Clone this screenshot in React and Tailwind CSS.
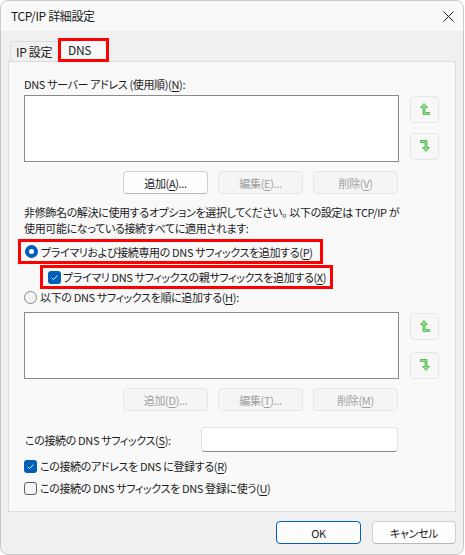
import React from 'react';

const font = "font-['Noto_Sans_CJK_JP','Noto_Sans',sans-serif] [font-feature-settings:'palt'] tracking-[-0.35px]";

function U({ children }) {
  return <span className="underline underline-offset-2">{children}</span>;
}

function Btn({ children, disabled, primary, className = '' }) {
  const look = disabled
    ? 'bg-[#f5f5f5] border-[#e5e5e5] text-[#a0a0a0]'
    : primary
      ? 'bg-[#fdfdfd] border-[#005fb8] text-[#1b1b1b]'
      : 'bg-[#fdfdfd] border-[#d0d0d0] border-b-[#b8b8b8] text-[#1b1b1b]';
  return (
    <div className={`h-[23px] flex items-center justify-center whitespace-nowrap rounded-[4px] border ${look} ${className}`}>
      {children}
    </div>
  );
}

function UpIcon() {
  return (
    <svg width="10" height="13" viewBox="0 0 10 13">
      <polygon points="4,0.5 7.5,4.5 5,4.5 5,9.5 9.5,9.5 9.5,11.5 3,11.5 3,4.5 0.5,4.5" fill="#8fe38a" stroke="#45ad45" strokeWidth="0.8" strokeLinejoin="round" />
    </svg>
  );
}

function DownIcon() {
  return (
    <svg width="10" height="13" viewBox="0 0 10 13">
      <polygon points="0.5,0.5 7,0.5 7,7.5 9.5,7.5 6,11.5 2.5,7.5 5,7.5 5,2.5 0.5,2.5" fill="#8fe38a" stroke="#45ad45" strokeWidth="0.8" strokeLinejoin="round" />
    </svg>
  );
}

function MoveBtn({ children, className = '' }) {
  return (
    <div className={`w-[29px] h-[27px] flex items-center justify-center rounded-[4px] border border-[#e5e5e5] bg-[#f7f7f7] ${className}`}>
      {children}
    </div>
  );
}

function Radio({ checked }) {
  return checked ? (
    <div className="w-[13px] h-[13px] rounded-full bg-[#005fb8] flex items-center justify-center shrink-0">
      <div className="w-[5px] h-[5px] rounded-full bg-white" />
    </div>
  ) : (
    <div className="w-[13px] h-[13px] rounded-full border border-[#8a8a8a] bg-[#f3f3f3] shrink-0" />
  );
}

function Check({ checked }) {
  return checked ? (
    <div className="w-[13px] h-[13px] rounded-[3px] bg-[#005fb8] flex items-center justify-center shrink-0">
      <svg width="9" height="9" viewBox="0 0 9 9">
        <path d="M1.8 4.8 L3.6 6.6 L7.4 2.6" fill="none" stroke="#fff" strokeWidth="0.9" />
      </svg>
    </div>
  ) : (
    <div className="w-[13px] h-[13px] rounded-[3px] border border-[#5e5e5e] bg-[#f5f5f5] shrink-0" />
  );
}

function ListRow({ upTop, downTop }) {
  return (
    <div className="flex">
      <div className="w-[375px] h-[67px] bg-white border border-[#8a8a8a]" />
      <div className="ml-[11px] flex flex-col">
        <MoveBtn className={upTop}><UpIcon /></MoveBtn>
        <MoveBtn className={downTop}><DownIcon /></MoveBtn>
      </div>
    </div>
  );
}

export default function App() {
  return (
    <div className={`w-[465px] h-[555px] bg-white ${font} text-[#1b1b1b] text-[11px] leading-[16px] whitespace-nowrap`}>
      <div className="w-[464px] h-[555px] flex flex-col rounded-[8px] border border-[#c9c9c9] overflow-hidden bg-[#f0f0f0]">
        {/* title bar */}
        <div className="h-[30px] shrink-0 flex items-center justify-between pl-[10px] pr-[9px] bg-[#f9f9f9]">
          <span className="text-[12px]">TCP/IP 詳細設定</span>
          <svg width="11" height="11" viewBox="0 0 11 11">
            <path d="M0.5 0.5 L10.5 10.5 M10.5 0.5 L0.5 10.5" stroke="#1b1b1b" strokeWidth="1" />
          </svg>
        </div>

        {/* tabs */}
        <div className="flex items-end pl-[9px] pt-[7px] h-[30px] shrink-0">
          <div className="h-[20px] w-[48px] pl-[5px] flex items-center border-l border-t border-[#dcdcdc] rounded-tl-[3px] bg-[#f0f0f0] text-[12px]">
            IP 設定
          </div>
          <div className="h-[24px] w-[51px] -mb-[1px] relative z-10 pl-[7px] flex items-center border-[3px] border-[#ff0000] bg-[#f9f9f9] text-[12px]">
            DNS
          </div>
        </div>

        {/* panel */}
        <div className="ml-[7px] w-[448px] h-[451px] shrink-0 border border-[#dcdcdc] bg-[#f9f9f9] pl-[15px] flex flex-col">
          <div className="mt-[14px] h-[16px]">DNS サーバー アドレス (使用順)(<U>N</U>):</div>
          <div className="mt-[3px]">
            <ListRow upTop="mt-[1px]" downTop="mt-[10px]" />
          </div>
          <div className="mt-[9px] flex gap-[10px] ml-[99px]">
            <Btn className="w-[85px]">追加(<U>A</U>)...</Btn>
            <Btn disabled className="w-[85px]">編集(<U>E</U>)...</Btn>
            <Btn disabled className="w-[85px]">削除(<U>V</U>)</Btn>
          </div>
          <div className="mt-[10px] leading-[16px]">
            <div>非修飾名の解決に使用するオプションを選択してください。 以下の設定は TCP/IP が</div>
            <div>使用可能になっている接続すべてに適用されます:</div>
          </div>
          <div className="mt-[3px] -ml-[6px] w-[305px] h-[25px] border-[3px] border-[#ff0000] flex items-center pl-[4px] gap-[3px]">
            <Radio checked />
            <span>プライマリおよび接続専用の DNS サフィックスを追加する(<U>P</U>)</span>
          </div>
          <div className="mt-[1px] ml-[16px] w-[293px] h-[24px] border-[3px] border-[#ff0000] flex items-center pl-[5px] gap-[2px]">
            <Check checked />
            <span>プライマリ DNS サフィックスの親サフィックスを追加する(<U>X</U>)</span>
          </div>
          <div className="h-[16px] flex items-center gap-[3px]">
            <Radio />
            <span>以下の DNS サフィックスを順に追加する(<U>H</U>):</span>
          </div>
          <div className="mt-[7px]">
            <ListRow upTop="mt-[1px]" downTop="mt-[12px]" />
          </div>
          <div className="mt-[9px] flex gap-[10px] ml-[99px]">
            <Btn disabled className="w-[85px]">追加(<U>D</U>)...</Btn>
            <Btn disabled className="w-[85px]">編集(<U>T</U>)...</Btn>
            <Btn disabled className="w-[85px]">削除(<U>M</U>)</Btn>
          </div>
          <div className="mt-[16px] h-[25px] flex items-center">
            <span className="w-[177px] pl-[1px]">この接続の DNS サフィックス(<U>S</U>):</span>
            <div className="w-[197px] h-[25px] bg-white border border-[#e3e3e3] border-b-[#8a8a8a] rounded-[4px]" />
          </div>
          <div className="mt-[6px] h-[16px] flex items-center gap-[3px]">
            <Check checked />
            <span>この接続のアドレスを DNS に登録する(<U>R</U>)</span>
          </div>
          <div className="mt-[6px] h-[16px] flex items-center gap-[3px]">
            <Check />
            <span>この接続の DNS サフィックスを DNS 登録に使う(<U>U</U>)</span>
          </div>
        </div>

        {/* footer */}
        <div className="mt-[9px] flex justify-end gap-[11px] pr-[7px]">
          <Btn primary className="w-[85px]">OK</Btn>
          <Btn className="w-[84px]">キャンセル</Btn>
        </div>
      </div>
    </div>
  );
}
